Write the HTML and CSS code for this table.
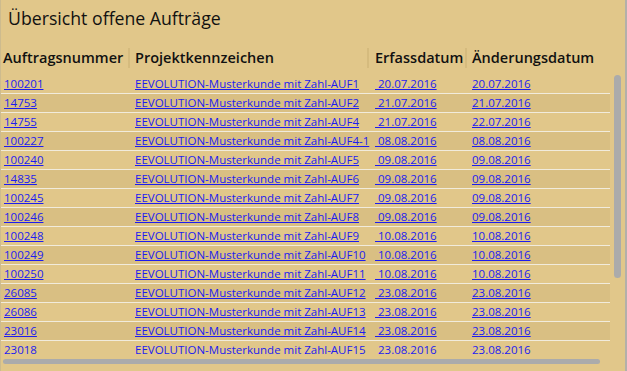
FILE: index.html
```html
<!DOCTYPE html>
<html lang="de">
<head>
<meta charset="utf-8">
<title>Übersicht offene Aufträge</title>
<link rel="stylesheet" href="styles.css">
</head>
<body>
<div class="panel">
  <h1 class="title">Übersicht offene Aufträge</h1>
  <div class="grid head">
    <div class="hcell c1">Auftragsnummer</div>
    <div class="hcell c2">Projektkennzeichen</div>
    <div class="hcell c3">Erfassdatum</div>
    <div class="hcell c4">Änderungsdatum</div>
  </div>
  <div class="rows">
    <div class="grid row"><a href="#">100201</a><a href="#">EEVOLUTION-Musterkunde mit Zahl-AUF1</a><a href="#">&nbsp;20.07.2016</a><a href="#">20.07.2016</a></div>
    <div class="grid row alt"><a href="#">14753</a><a href="#">EEVOLUTION-Musterkunde mit Zahl-AUF2</a><a href="#">&nbsp;21.07.2016</a><a href="#">21.07.2016</a></div>
    <div class="grid row"><a href="#">14755</a><a href="#">EEVOLUTION-Musterkunde mit Zahl-AUF4</a><a href="#">&nbsp;21.07.2016</a><a href="#">22.07.2016</a></div>
    <div class="grid row alt"><a href="#">100227</a><a href="#">EEVOLUTION-Musterkunde mit Zahl-AUF4-1</a><a href="#">&nbsp;08.08.2016</a><a href="#">08.08.2016</a></div>
    <div class="grid row"><a href="#">100240</a><a href="#">EEVOLUTION-Musterkunde mit Zahl-AUF5</a><a href="#">&nbsp;09.08.2016</a><a href="#">09.08.2016</a></div>
    <div class="grid row alt"><a href="#">14835</a><a href="#">EEVOLUTION-Musterkunde mit Zahl-AUF6</a><a href="#">&nbsp;09.08.2016</a><a href="#">09.08.2016</a></div>
    <div class="grid row"><a href="#">100245</a><a href="#">EEVOLUTION-Musterkunde mit Zahl-AUF7</a><a href="#">&nbsp;09.08.2016</a><a href="#">09.08.2016</a></div>
    <div class="grid row alt"><a href="#">100246</a><a href="#">EEVOLUTION-Musterkunde mit Zahl-AUF8</a><a href="#">&nbsp;09.08.2016</a><a href="#">09.08.2016</a></div>
    <div class="grid row"><a href="#">100248</a><a href="#">EEVOLUTION-Musterkunde mit Zahl-AUF9</a><a href="#">&nbsp;10.08.2016</a><a href="#">10.08.2016</a></div>
    <div class="grid row alt"><a href="#">100249</a><a href="#">EEVOLUTION-Musterkunde mit Zahl-AUF10</a><a href="#">&nbsp;10.08.2016</a><a href="#">10.08.2016</a></div>
    <div class="grid row"><a href="#">100250</a><a href="#">EEVOLUTION-Musterkunde mit Zahl-AUF11</a><a href="#">&nbsp;10.08.2016</a><a href="#">10.08.2016</a></div>
    <div class="grid row alt"><a href="#">26085</a><a href="#">EEVOLUTION-Musterkunde mit Zahl-AUF12</a><a href="#">&nbsp;23.08.2016</a><a href="#">23.08.2016</a></div>
    <div class="grid row"><a href="#">26086</a><a href="#">EEVOLUTION-Musterkunde mit Zahl-AUF13</a><a href="#">&nbsp;23.08.2016</a><a href="#">23.08.2016</a></div>
    <div class="grid row alt"><a href="#">23016</a><a href="#">EEVOLUTION-Musterkunde mit Zahl-AUF14</a><a href="#">&nbsp;23.08.2016</a><a href="#">23.08.2016</a></div>
    <div class="grid row last"><a href="#">23018</a><a href="#">EEVOLUTION-Musterkunde mit Zahl-AUF15</a><a href="#">&nbsp;23.08.2016</a><a href="#">23.08.2016</a></div>
  </div>
  <div class="vscroll"></div>
  <div class="hscroll"></div>
</div>
</body>
</html>
```
FILE: styles.css
```css
html, body {
  margin: 0;
  padding: 0;
}
body {
  width: 627px;
  height: 371px;
  overflow: hidden;
  background: #e1c78a;
  font-family: "Open Sans", "Noto Sans", sans-serif;
  color: #111;
}
.panel {
  position: relative;
  box-sizing: border-box;
  width: 627px;
  height: 371px;
  border-left: 1px solid #cdbb8e;
  border-right: 2px solid #b3b0aa;
}
.title {
  margin: 0;
  padding: 6px 0 0 7px;
  font-size: 17.7px;
  line-height: 24px;
  font-weight: 400;
  color: #111;
}
.grid {
  display: grid;
  grid-template-columns: 131px 240px 97px 141px;
  width: 609px;
}
.head {
  margin-top: 18px;
  height: 20px;
}
.hcell {
  font-size: 14.5px;
  font-weight: 600;
  line-height: 20px;
  white-space: nowrap;
  overflow: visible;
  padding-left: 3px;
}
.hcell.c1 { padding-left: 2px; margin-right: 2px; border-right: 2px solid #d5bb7e; }
.hcell.c2 { margin-right: 3px; border-right: 2px solid #d5bb7e; }
.hcell.c3 { margin-right: 2px; border-right: 2px solid #d5bb7e; }
.rows {
  margin-top: 7px;
}
.row {
  height: 18px;
  border-bottom: 1px solid #f1ebdc;
  font-size: 11.5px;
  line-height: 18px;
}
.row.alt {
  background: #d9bf83;
}
.row.last {
  border-bottom: none;
}
.row a {
  color: #1c1cf0;
  text-decoration: underline;
  white-space: nowrap;
  padding-left: 3px;
  justify-self: start;
}
.row.last a {
  text-decoration: none;
}
.vscroll {
  position: absolute;
  left: 613px;
  top: 75px;
  width: 7px;
  height: 203px;
  border-radius: 4px;
  background: #ababab;
}
.hscroll {
  position: absolute;
  left: 2px;
  top: 359px;
  width: 597px;
  height: 5px;
  border-radius: 3px;
  background: #ababab;
}
```
